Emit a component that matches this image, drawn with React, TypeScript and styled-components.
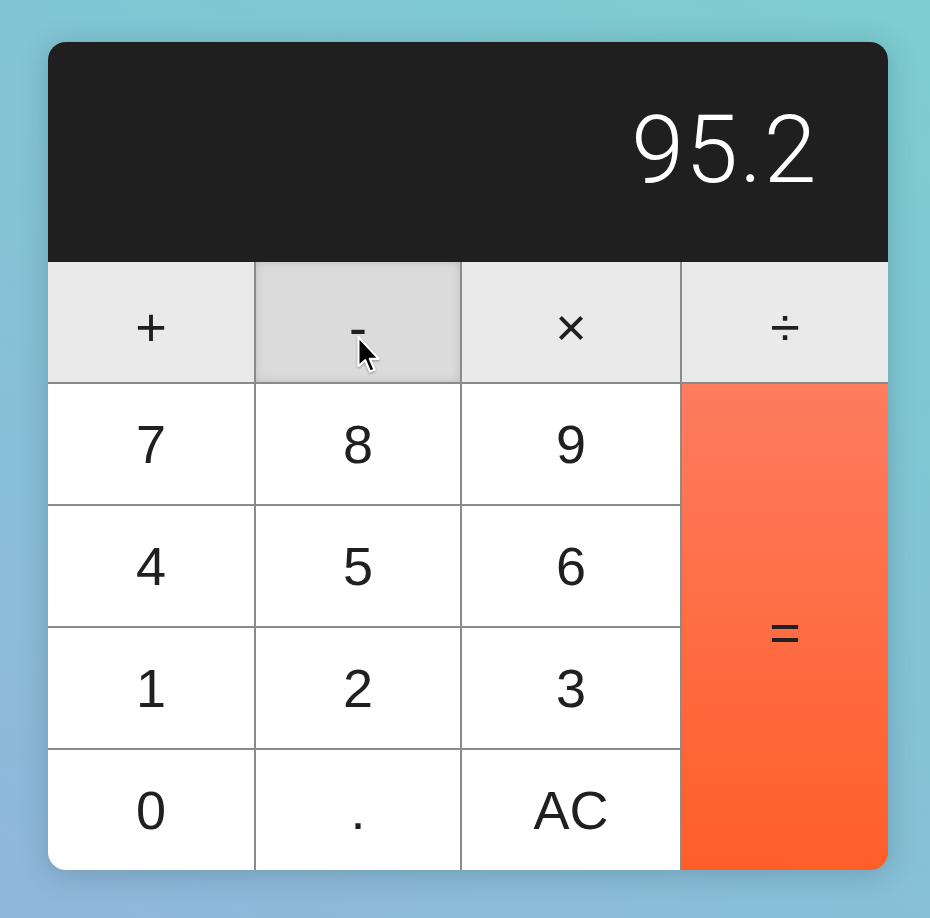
import React from "react";
import styled, { createGlobalStyle } from "styled-components";

const Global = createGlobalStyle`
  html, body { margin: 0; padding: 0; }
  body {
    width: 930px;
    height: 918px;
    overflow: hidden;
    background: linear-gradient(30deg, #90b6da 0%, #84c3d6 50%, #7ccdd0 100%);
    font-family: "Liberation Sans", Arial, sans-serif;
  }
`;

const Page = styled.div`
  width: 930px;
  height: 918px;
  padding: 42px 42px 48px 48px;
  box-sizing: border-box;
`;

const Calculator = styled.div`
  width: 840px;
  border-radius: 18px;
  overflow: hidden;
  box-shadow: 0 4px 28px rgba(30, 60, 80, 0.25);
`;

const Display = styled.div`
  height: 220px;
  background: #1f1f1f;
  color: #fff;
  display: flex;
  align-items: center;
  justify-content: flex-end;
  padding: 0 70px 6px 0;
  box-sizing: border-box;
  font-family: Roboto, "Liberation Sans", sans-serif;
  font-weight: 300;
  font-size: 95px;
  letter-spacing: 1.5px;
  line-height: 1;
`;

const Keypad = styled.div`
  display: grid;
  grid-template-columns: 206px 204px 218px 206px;
  grid-template-rows: repeat(5, 120px);
  gap: 2px;
  background: #8b8b8b;
`;

const Key = styled.button<{ $kind: "op" | "digit" | "equals"; $hover?: boolean }>`
  position: relative;
  border: none;
  margin: 0;
  padding: ${(p) => (p.$kind === "digit" ? "0" : "10px 0 0")};
  display: flex;
  align-items: center;
  justify-content: center;
  font-family: "Liberation Sans", Arial, sans-serif;
  font-size: 54px;
  line-height: 1;
  color: #202020;
  cursor: pointer;
  background: ${(p) =>
    p.$kind === "equals"
      ? "linear-gradient(to bottom, #ff7c5f 0%, #ff5e29 100%)"
      : p.$kind === "op"
      ? p.$hover
        ? "#dbdbdb"
        : "#eaeaea"
      : "#ffffff"};
  box-shadow: ${(p) => (p.$hover ? "inset 0 0 10px rgba(0,0,0,0.14)" : "none")};
  ${(p) => (p.$kind === "equals" ? "grid-column: 4; grid-row: 2 / span 4;" : "")}
`;

const Pointer = styled.svg`
  position: absolute;
  left: 100px;
  top: 73px;
  pointer-events: none;
  filter: drop-shadow(0 1px 1px rgba(0, 0, 0, 0.35));
`;

const Cursor = () => (
  <Pointer width="26" height="40" viewBox="0 0 13 20">
    <path
      d="M1.2 1 L1.2 15.6 L4.6 12.6 L7 18.3 L9.3 17.4 L6.9 11.9 L11.4 11.9 Z"
      fill="#000"
      stroke="#fff"
      strokeWidth="1.1"
      strokeLinejoin="round"
    />
  </Pointer>
);

export default function App() {
  const rows = [
    ["7", "8", "9"],
    ["4", "5", "6"],
    ["1", "2", "3"],
    ["0", ".", "AC"],
  ];
  return (
    <>
      <Global />
      <Page>
        <Calculator>
          <Display>95.2</Display>
          <Keypad>
            <Key $kind="op">+</Key>
            <Key $kind="op" $hover>
              -
              <Cursor />
            </Key>
            <Key $kind="op">×</Key>
            <Key $kind="op">÷</Key>
            {rows.map((r, i) => (
              <React.Fragment key={i}>
                {r.map((k) => (
                  <Key key={k} $kind="digit">
                    {k}
                  </Key>
                ))}
                {i === 0 && <Key $kind="equals">=</Key>}
              </React.Fragment>
            ))}
          </Keypad>
        </Calculator>
      </Page>
    </>
  );
}
